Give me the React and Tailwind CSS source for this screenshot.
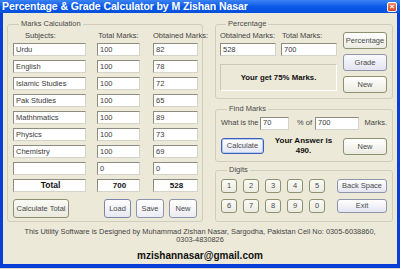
const subjects = [
  ["Urdu", "100", "82"],
  ["English", "100", "78"],
  ["Islamic Studies", "100", "72"],
  ["Pak Studies", "100", "65"],
  ["Mathhmatics", "100", "89"],
  ["Physics", "100", "73"],
  ["Chemistry", "100", "69"],
  ["", "0", "0"],
];

function Box({ value, className = "" }) {
  return (
    <div
      className={`h-[13px] bg-white border border-t-[#8E8C80] border-l-[#8E8C80] border-r-[#D6D4C8] border-b-[#D6D4C8] flex items-center pl-[2px] text-[7.5px] leading-none whitespace-nowrap text-[#3A3A3A] ${className}`}
    >
      {value}
    </div>
  );
}

function Btn({ children, className = "" }) {
  return (
    <button
      className={`flex items-center justify-center rounded-[3px] border text-[7.5px] leading-none whitespace-nowrap text-[#4A4A4A] ${className}`}
    >
      {children}
    </button>
  );
}

function Group({ title, className = "", children }) {
  return (
    <fieldset className={`border border-[#CFCDBF] rounded-[3px] ${className}`}>
      <legend className="ml-[6px] px-[2px] text-[7.5px] leading-[10px] whitespace-nowrap text-[#4A4A4A]">
        {title}
      </legend>
      {children}
    </fieldset>
  );
}

export default function App() {
  return (
    <div className="w-[400px] h-[269px] bg-[#0A3ED6] flex flex-col overflow-hidden font-['Liberation_Sans',sans-serif]">
      {/* title bar */}
      <div className="h-[13px] bg-gradient-to-b from-[#3B82F6] via-[#0A5AE8] to-[#0550DC] flex items-center pl-[2px] pr-[3px]">
        <span className="text-white font-bold text-[10.5px] leading-none tracking-[-0.1px] whitespace-nowrap">
          Percentage &amp; Grade Calculator by M Zishan Nasar
        </span>
        <div className="ml-auto w-[10px] h-[10px] rounded-[2px] border border-white bg-gradient-to-b from-[#F08A6C] to-[#D9431E] flex items-center justify-center text-white text-[8px] font-bold leading-none">
          ×
        </div>
      </div>

      {/* client area */}
      <div className="flex-1 mx-[3px] bg-[#ECE9D8] flex flex-col">
        <div className="flex pt-[6px] pl-[4px] gap-[12px]">
          {/* marks calculation */}
          <Group title="Marks Calculation" className="w-[196px] h-[203px] pl-[5px]">
            <div className="flex h-[14px] items-center text-[7.5px] leading-none whitespace-nowrap text-[#444]">
              <span className="w-[84px] pl-[12px]">Subjects:</span>
              <span className="w-[43px] text-center">Total Marks:</span>
              <span className="w-[58px] pl-[13px] text-center">Obtained Marks:</span>
            </div>
            <div className="flex flex-col gap-[4px]">
              {subjects.map(([s, t, o], i) => (
                <div key={i} className="flex">
                  <Box value={s} className="w-[73px]" />
                  <Box value={t} className="w-[43px] ml-[11px]" />
                  <Box value={o} className="w-[45px] ml-[13px]" />
                </div>
              ))}
              <div className="flex">
                <Box value="Total" className="w-[73px] justify-center pl-0 text-[8.5px] text-[#111] font-bold" />
                <Box value="700" className="w-[43px] ml-[11px] justify-center pl-0 text-[8px] text-[#111] font-bold" />
                <Box value="528" className="w-[45px] ml-[13px] justify-center pl-0 text-[8px] text-[#111] font-bold" />
              </div>
            </div>
            <div className="flex mt-[7px] items-center">
              <Btn className="w-[56px] h-[19px] border-[#8C9270] bg-gradient-to-b from-[#FBFBF6] to-[#EAE9DE]">
                Calculate Total
              </Btn>
              <Btn className="w-[27px] h-[19px] ml-[35px] border-[#7C87A8] bg-gradient-to-b from-[#FFFFFF] to-[#E6E7F2]">
                Load
              </Btn>
              <Btn className="w-[28px] h-[19px] ml-[5px] border-[#8E96AE] bg-gradient-to-b from-[#FFFFFF] to-[#ECECF4]">
                Save
              </Btn>
              <Btn className="w-[28px] h-[19px] ml-[5px] border-[#8E96AE] bg-gradient-to-b from-[#FFFFFF] to-[#ECECF4]">
                New
              </Btn>
            </div>
          </Group>

          {/* right column */}
          <div className="w-[178px] flex flex-col">
            <Group title="Percentage" className="h-[80px] pl-[4px]">
              <div className="flex gap-[6px]">
                <div className="w-[117px] flex flex-col">
                  <div className="flex h-[12px] items-center text-[7.5px] leading-none whitespace-nowrap text-[#444] mt-[1px]">
                    <span className="w-[62px]">Obtained Marks:</span>
                    <span>Total Marks:</span>
                  </div>
                  <div className="flex gap-[5px] mt-[1px]">
                    <Box value="528" className="w-[56px]" />
                    <Box value="700" className="w-[56px]" />
                  </div>
                  <div className="mt-[8px] h-[27px] border border-t-[#C9C7BA] border-l-[#C9C7BA] border-r-[#FFFFFF] border-b-[#FFFFFF] flex items-center justify-center font-bold text-[7.8px] whitespace-nowrap text-[#111]">
                    Your get 75% Marks.
                  </div>
                </div>
                <div className="w-[44px] flex flex-col gap-[5px] mt-[3px]">
                  <Btn className="h-[17px] border-[#8C9270] bg-gradient-to-b from-[#FFFFFF] to-[#ECEBE2]">Percentage</Btn>
                  <Btn className="h-[17px] border-[#8E96AE] bg-gradient-to-b from-[#FAFAFE] to-[#E4E4F2]">Grade</Btn>
                  <Btn className="h-[17px] border-[#8C9270] bg-gradient-to-b from-[#FFFFFF] to-[#ECEBE2]">New</Btn>
                </div>
              </div>
            </Group>

            <Group title="Find Marks" className="h-[58px] mt-[5px] pl-[5px] pr-[5px]">
              <div className="flex items-center h-[12px] mt-[3px] text-[7.5px] leading-none whitespace-nowrap text-[#444]">
                <span className="w-[39px]">What is the</span>
                <Box value="70" className="w-[29px]" />
                <span className="ml-[8px] w-[18px]">% of</span>
                <Box value="700" className="w-[44px]" />
                <span className="ml-auto">Marks.</span>
              </div>
              <div className="flex items-start mt-[9px]">
                <Btn className="w-[43px] h-[16px] border-[#3C5EB8] bg-gradient-to-b from-[#FFFFFF] to-[#E2E6F4] shadow-[inset_0_0_0_1px_#B8CCF0]">
                  Calculate
                </Btn>
                <div className="flex-1 flex flex-col items-center -mt-[2px] font-bold text-[8px] leading-[10px] whitespace-nowrap text-[#111]">
                  <span>Your Answer is</span>
                  <span>490.</span>
                </div>
                <Btn className="w-[44px] h-[17px] border-[#8C9270] bg-gradient-to-b from-[#FFFFFF] to-[#ECEBE2]">
                  New
                </Btn>
              </div>
            </Group>

            <Group title="Digits" className="h-[57px] mt-[3px] pl-[5px] pr-[5px]">
              <div className="flex flex-col gap-[6px] mt-[4px]">
                {[["1", "2", "3", "4", "5", "Back Space"], ["6", "7", "8", "9", "0", "Exit"]].map((row, r) => (
                  <div key={r} className="flex gap-[6px]">
                    {row.slice(0, 5).map((d) => (
                      <Btn key={d} className="w-[16px] h-[14px] border-[#8C9270] bg-gradient-to-b from-[#FBFBF6] to-[#ECEBE2]">
                        {d}
                      </Btn>
                    ))}
                    <Btn className="w-[50px] h-[14px] ml-auto border-[#8E96AE] bg-gradient-to-b from-[#FFFFFF] to-[#E4E5F2]">
                      {row[5]}
                    </Btn>
                  </div>
                ))}
              </div>
            </Group>
          </div>
        </div>

        {/* footer */}
        <div className="flex flex-col items-center mt-[6px] text-[7.4px] leading-[8px] whitespace-nowrap text-[#444]">
          <span>This Utility Software is Designed by Muhammad Zishan Nasar, Sargodha, Pakistan Cell No: 0305-6038860,</span>
          <span>0303-4830826</span>
          <span className="mt-[6px] font-bold text-[10px] leading-[12px] text-[#111]">
            mzishannasar@gmail.com
          </span>
        </div>
      </div>
      <div className="h-[4px]" />
      <div className="h-[1px] bg-[#D8D4C8]" />
    </div>
  );
}
